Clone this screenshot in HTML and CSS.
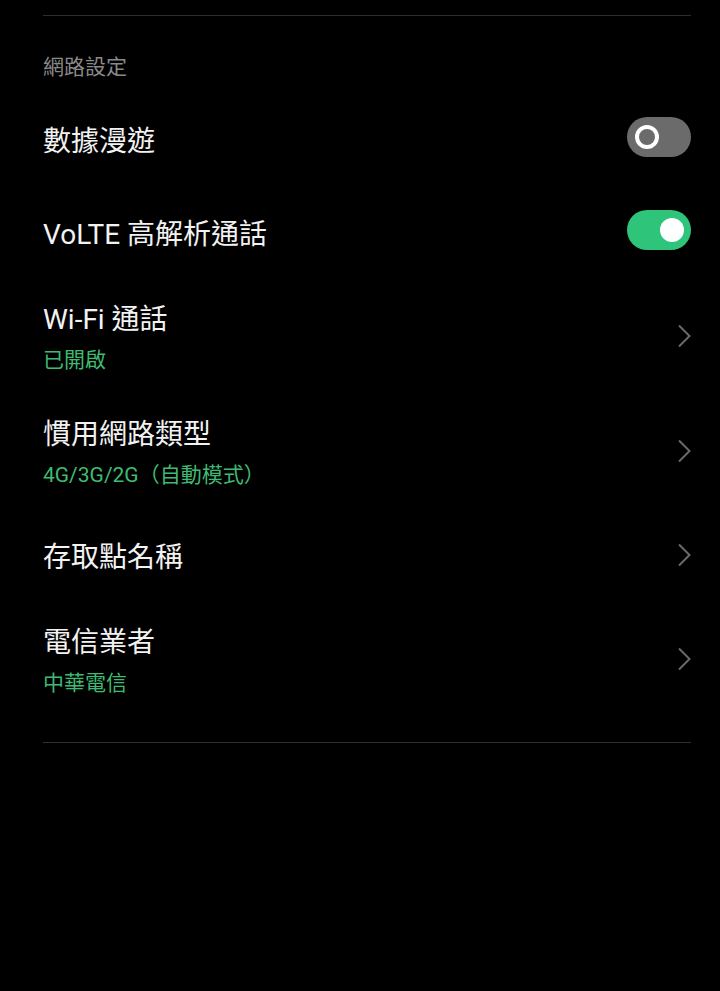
FILE: index.html
```html
<!DOCTYPE html>
<html lang="zh-Hant">
<head>
<meta charset="UTF-8">
<meta name="viewport" content="width=device-width, initial-scale=1.0">
<title>網路設定</title>
<link rel="stylesheet" href="styles.css">
</head>
<body>
<div class="settings">
  <div class="divider top"></div>
  <div class="section-title">網路設定</div>

  <div class="row">
    <div class="text"><div class="title">數據漫遊</div></div>
    <div class="toggle off"><span class="knob"></span></div>
  </div>

  <div class="row">
    <div class="text"><div class="title">VoLTE 高解析通話</div></div>
    <div class="toggle on"><span class="knob"></span></div>
  </div>

  <div class="row tall">
    <div class="text">
      <div class="title">Wi-Fi 通話</div>
      <div class="sub">已開啟</div>
    </div>
    <svg class="chevron" width="14" height="24" viewBox="0 0 14 24"><path d="M2 1.5 L12.5 12 L2 22.5" /></svg>
  </div>

  <div class="row tall">
    <div class="text">
      <div class="title">慣用網路類型</div>
      <div class="sub">4G/3G/2G（自動模式）</div>
    </div>
    <svg class="chevron" width="14" height="24" viewBox="0 0 14 24"><path d="M2 1.5 L12.5 12 L2 22.5" /></svg>
  </div>

  <div class="row">
    <div class="text"><div class="title">存取點名稱</div></div>
    <svg class="chevron" width="14" height="24" viewBox="0 0 14 24"><path d="M2 1.5 L12.5 12 L2 22.5" /></svg>
  </div>

  <div class="row tall">
    <div class="text">
      <div class="title">電信業者</div>
      <div class="sub">中華電信</div>
    </div>
    <svg class="chevron" width="14" height="24" viewBox="0 0 14 24"><path d="M2 1.5 L12.5 12 L2 22.5" /></svg>
  </div>

  <div class="divider bottom"></div>
</div>
</body>
</html>
```

FILE: styles.css
```css
body {
  margin: 0;
  padding: 0;
  background-color: #000;
  font-family: Roboto, "Noto Sans CJK TC", sans-serif;
  color: #fff;
}
.settings {
  width: 648px;
  margin-left: 43px;
}
.divider {
  height: 1px;
  background-color: #2f2f2f;
}
.divider.top {
  margin-top: 15px;
}
.divider.bottom {
  margin-top: 26px;
}
.section-title {
  height: 40px;
  padding-top: 36px;
  font-size: 21px;
  line-height: 30px;
  color: #8a8a8a;
}
.row {
  height: 93px;
  display: flex;
  align-items: center;
  justify-content: space-between;
}
.row.tall {
  height: 115px;
}
.text {
  margin-top: 6px;
}
.title {
  font-size: 28px;
  line-height: 36px;
  color: #f2f2f2;
}
.sub {
  margin-top: 7px;
  font-size: 21px;
  line-height: 30px;
  color: #3fba72;
}
.toggle {
  width: 64px;
  height: 40px;
  margin-bottom: 3px;
  border-radius: 20px;
  display: flex;
  align-items: center;
  box-sizing: border-box;
}
.toggle.off {
  background-color: #6b6b6b;
  padding-left: 8px;
}
.toggle.on {
  background-color: #2ec57a;
  justify-content: flex-end;
  padding-right: 7px;
}
.knob {
  width: 24px;
  height: 24px;
  border-radius: 50%;
  box-sizing: border-box;
}
.toggle.off .knob {
  border: 4px solid #fff;
  background-color: #6b6b6b;
}
.toggle.on .knob {
  background-color: #fff;
}
.chevron path {
  fill: none;
  stroke: #6a6a6a;
  stroke-width: 2;
}
```
